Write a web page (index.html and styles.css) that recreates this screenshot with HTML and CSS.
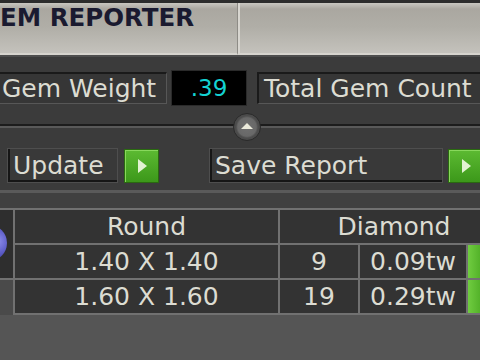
FILE: index.html
```html
<!DOCTYPE html>
<html lang="en">
<head>
    <meta charset="UTF-8">
    <meta name="viewport" content="width=device-width, initial-scale=1.0">
    <title>Gem Reporter</title>
    <link rel="stylesheet" href="styles.css">
</head>
<body>
    <div class="titlebar">
        <div class="tab"><span class="tab-title">EM REPORTER</span></div>
        <div class="tab-rest"></div>
    </div>

    <div class="weights">
        <div class="label-box gem-weight">Gem Weight</div>
        <div class="readout">.39</div>
        <div class="label-box total-count">Total Gem Count</div>
    </div>

    <div class="slider">
        <div class="thumb"><span class="thumb-arrow"></span></div>
    </div>

    <div class="actions">
        <div class="action-box update">Update</div>
        <button class="go"></button>
        <div class="action-box save">Save Report</div>
        <button class="go"></button>
    </div>

    <div class="results">
        <div class="side">
            <div class="side-top"><span class="orb"></span></div>
        </div>
        <div class="grid">
            <div class="cell">Round</div>
            <div class="cell span3">Diamond</div>

            <div class="cell">1.40 X 1.40</div>
            <div class="cell">9</div>
            <div class="cell">0.09tw</div>
            <div class="cell green"></div>

            <div class="cell">1.60 X 1.60</div>
            <div class="cell">19</div>
            <div class="cell">0.29tw</div>
            <div class="cell green"></div>
        </div>
    </div>
</body>
</html>
```

FILE: styles.css
```css
* {
    box-sizing: border-box;
}

html, body {
    margin: 0;
}

body {
    width: 480px;
    height: 360px;
    overflow: hidden;
    background-color: #3b3b3b;
    color: #dcdcd2;
    font-family: "DejaVu Sans", Verdana, sans-serif;
}

/* barra de titulo */
.titlebar {
    display: flex;
    height: 57px;
    border-top: 3px solid #2c2c2c;
    border-bottom: 2px solid #4e4e4e;
}

.tab, .tab-rest {
    background: linear-gradient(#c8c6c0 0, #aaa7a0 6px, #b0aea7 24px, #c4c2bc 100%);
    border-bottom: 2px solid #d6d4ce;
}

.tab {
    flex: none;
    width: 238px;
    padding-top: 1px;
    border-right: 1px solid #8e8c86;
}

.tab-title {
    display: block;
    font-size: 24.5px;
    line-height: 28px;
    font-weight: bold;
    color: #1a1a30;
    white-space: nowrap;
}

.tab-rest {
    flex: 1;
    border-left: 2px solid #d8d6d0;
}

/* peso e contagem */
.weights {
    display: flex;
    align-items: center;
    height: 50px;
    padding-top: 12px;
}

.label-box {
    display: flex;
    align-items: center;
    flex: none;
    height: 32px;
    font-size: 25px;
    white-space: nowrap;
    background-color: #363636;
    border-top: 2px solid #1a1a1a;
    border-left: 2px solid #1a1a1a;
    border-right: 1px solid #575757;
    border-bottom: 1px solid #575757;
}

.gem-weight {
    width: 167px;
    padding-left: 2px;
    border-left: none;
}

.readout {
    flex: none;
    width: 76px;
    height: 36px;
    margin-left: 4px;
    background-color: #000;
    border: 1px solid #2a2a2a;
    color: #14d2d2;
    font-size: 23px;
    line-height: 34px;
    text-align: center;
}

.total-count {
    width: 260px;
    margin-left: 10px;
    padding-left: 5px;
}

/* slider */
.slider {
    height: 36px;
    background: linear-gradient(to bottom, transparent 17px, #1c1c1c 17px, #1c1c1c 19px, #595959 19px, #595959 21px, transparent 21px);
}

.thumb {
    display: flex;
    align-items: center;
    justify-content: center;
    width: 28px;
    height: 28px;
    margin-left: 233px;
    position: relative;
    top: 6px;
    border-radius: 50%;
    border: 1px solid #2a2a2a;
    background: radial-gradient(circle, #707070 0, #686868 50%, #4c4c4c 60%, #454545 100%);
}

.thumb-arrow {
    width: 0;
    height: 0;
    margin-bottom: 3px;
    border-left: 6px solid transparent;
    border-right: 6px solid transparent;
    border-bottom: 6px solid #ecebdc;
}

/* botoes */
.actions {
    display: flex;
    align-items: flex-start;
    height: 50px;
    padding: 5px 0 0 7px;
    border-bottom: 3px solid #5a5a5a;
}

.action-box {
    display: flex;
    align-items: center;
    flex: none;
    height: 35px;
    padding-left: 5px;
    font-size: 25px;
    white-space: nowrap;
    background-color: #393939;
    border: 1px solid #4e4e4e;
    box-shadow: inset 2px -2px 0 #161616;
}

.update {
    width: 111px;
}

.save {
    width: 234px;
    margin-left: 50px;
}

.go {
    display: flex;
    align-items: center;
    justify-content: center;
    flex: none;
    width: 35px;
    height: 34px;
    margin: 1px 0 0 6px;
    padding: 0;
    border: 1px solid #2a6a10;
    background: linear-gradient(#5cba32, #3c981a);
    box-shadow: inset 1px 1px 0 #88d85c;
    cursor: pointer;
}

.save + .go {
    margin-left: 5px;
}

.go::before {
    content: "";
    width: 0;
    height: 0;
    margin-left: 2px;
    border-top: 7px solid transparent;
    border-bottom: 7px solid transparent;
    border-left: 9px solid #e2f2d2;
}

/* tabela */
.results {
    display: flex;
    align-items: flex-start;
    height: 170px;
    padding-top: 15px;
    background: linear-gradient(#404040 0, #404040 15px, #555 15px);
}

.side {
    flex: none;
    width: 13px;
    height: 107px;
    background-color: #4a4a4a;
}

.side-top {
    height: 72px;
    overflow: hidden;
    background-color: #2e2e2e;
    border-top: 2px solid #717171;
    border-bottom: 2px solid #717171;
}

.orb {
    display: block;
    width: 36px;
    height: 36px;
    margin: 15px 0 0 -29px;
    border-radius: 50%;
    background: radial-gradient(circle at 70% 45%, #9494ee 0, #6262cc 35%, #3a3aa0 65%, #1c1c50 100%);
}

.grid {
    flex: none;
    display: grid;
    grid-template-columns: 263px 78px 106px 40px;
    grid-auto-rows: 33px;
    gap: 2px;
    padding: 2px;
    background-color: #717171;
}

.cell {
    display: flex;
    align-items: center;
    justify-content: center;
    white-space: nowrap;
    font-size: 25px;
    background-color: #333;
}

.span3 {
    grid-column: span 3;
}

.green {
    background: linear-gradient(to right, #70cc40, #4aaa22 40%, #3e9a1a);
}
```
